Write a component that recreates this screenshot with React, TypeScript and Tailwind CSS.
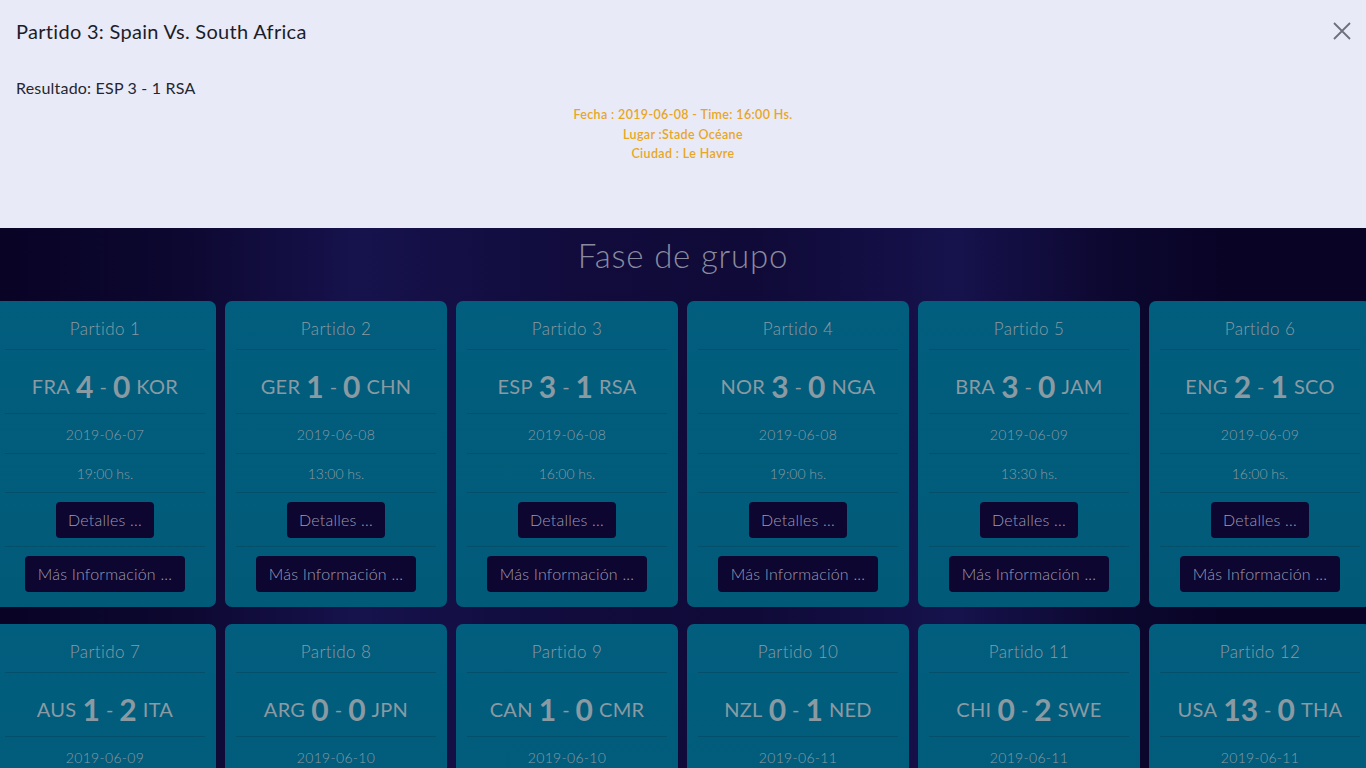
import React from "react";

type Match = { n: number; a: string; sa: number; sb: number; b: string; date: string; time: string };

const matches: Match[] = [
  { n: 1, a: "FRA", sa: 4, sb: 0, b: "KOR", date: "2019-06-07", time: "19:00 hs." },
  { n: 2, a: "GER", sa: 1, sb: 0, b: "CHN", date: "2019-06-08", time: "13:00 hs." },
  { n: 3, a: "ESP", sa: 3, sb: 1, b: "RSA", date: "2019-06-08", time: "16:00 hs." },
  { n: 4, a: "NOR", sa: 3, sb: 0, b: "NGA", date: "2019-06-08", time: "19:00 hs." },
  { n: 5, a: "BRA", sa: 3, sb: 0, b: "JAM", date: "2019-06-09", time: "13:30 hs." },
  { n: 6, a: "ENG", sa: 2, sb: 1, b: "SCO", date: "2019-06-09", time: "16:00 hs." },
  { n: 7, a: "AUS", sa: 1, sb: 2, b: "ITA", date: "2019-06-09", time: "19:00 hs." },
  { n: 8, a: "ARG", sa: 0, sb: 0, b: "JPN", date: "2019-06-10", time: "19:00 hs." },
  { n: 9, a: "CAN", sa: 1, sb: 0, b: "CMR", date: "2019-06-10", time: "19:00 hs." },
  { n: 10, a: "NZL", sa: 0, sb: 1, b: "NED", date: "2019-06-11", time: "19:00 hs." },
  { n: 11, a: "CHI", sa: 0, sb: 2, b: "SWE", date: "2019-06-11", time: "19:00 hs." },
  { n: 12, a: "USA", sa: 13, sb: 0, b: "THA", date: "2019-06-11", time: "19:00 hs." },
];

function Divider() {
  return <div className="mx-[11px] h-px bg-[#04506a]" />;
}

function Card({ m }: { m: Match }) {
  return (
    <div className="w-[231px] shrink-0 px-[4.5px]">
      <div className="flex h-[306px] flex-col rounded-[7px] bg-[linear-gradient(180deg,#025e7e,#015a78)] text-[#8a9aa3]">
        <div className="flex h-[48px] items-end justify-center pb-[8px] text-[17px] font-light tracking-[0.4px]">Partido {m.n}</div>
        <Divider />
        <div className="flex h-[63px] items-center justify-center gap-[6px] pt-[9px]">
          <span className="text-[20px] font-normal tracking-[0.3px]">{m.a}</span>
          <span className="text-[30px] font-bold leading-none">{m.sa}</span>
          <span className="text-[20px]">-</span>
          <span className="text-[30px] font-bold leading-none">{m.sb}</span>
          <span className="text-[20px] font-normal tracking-[0.3px]">{m.b}</span>
        </div>
        <Divider />
        <div className="flex h-[39px] items-center justify-center pt-[2px] text-[14px] font-light tracking-[0.3px]">{m.date}</div>
        <Divider />
        <div className="flex h-[38px] items-center justify-center text-[14px] font-light">{m.time}</div>
        <Divider />
        <div className="flex h-[53px] items-center justify-center">
          <button className="h-[36px] w-[98px] rounded-[4px] bg-[#0c0630] text-[16px] font-light tracking-[0.2px] text-[#9e9ab2]">Detalles ...</button>
        </div>
        <Divider />
        <div className="flex flex-1 items-start justify-center pt-[9px]">
          <button className="h-[36px] w-[160px] rounded-[4px] bg-[#0c0630] text-[16px] font-light tracking-[0.2px] text-[#9e9ab2]">Más Información ...</button>
        </div>
      </div>
    </div>
  );
}

export default function App() {
  return (
    <div className="h-[768px] w-[1366px] overflow-hidden font-['Lato','Noto_Sans',sans-serif]">
      <div className="relative h-[228px] bg-[#e8eaf8]">
        <div className="absolute left-[16px] top-[16px] text-[20px] tracking-[0.3px] text-[#1d1d28]">Partido 3: Spain Vs. South Africa</div>
        <button className="absolute right-[15px] top-[22px] text-[#6c6f7c]">
          <svg width="18" height="18" viewBox="0 0 18 18" fill="none" stroke="currentColor" strokeWidth="1.8">
            <path d="M1 1 L17 17 M17 1 L1 17" />
          </svg>
        </button>
        <div className="absolute left-[16px] top-[76px] text-[16px] tracking-[0.2px] text-[#26262f]">Resultado: ESP 3 - 1 RSA</div>
        <div className="absolute left-0 right-0 top-[105px] flex flex-col items-center text-[12.5px] font-semibold leading-[19.5px] tracking-[0.35px] text-[#e8a624]">
          <div>Fecha : 2019-06-08 - Time: 16:00 Hs.</div>
          <div>Lugar :Stade Océane</div>
          <div>Ciudad : Le Havre</div>
        </div>
      </div>
      <div className="h-[540px] bg-[linear-gradient(90deg,#090326_0%,#0c072e_12%,#16124c_26%,#110c3c_42%,#0f0a37_55%,#16124c_70%,#0c072e_82%,#090326_90%)]">
        <h2 className="flex h-[56px] items-center justify-center text-[33px] font-light tracking-[0.8px] text-[#8a8a9e]">Fase de grupo</h2>
        <div className="ml-[-10.5px] mt-[17px] flex w-[1386px] flex-wrap gap-y-[17px]">
          {matches.map((m) => (
            <Card key={m.n} m={m} />
          ))}
        </div>
      </div>
    </div>
  );
}
